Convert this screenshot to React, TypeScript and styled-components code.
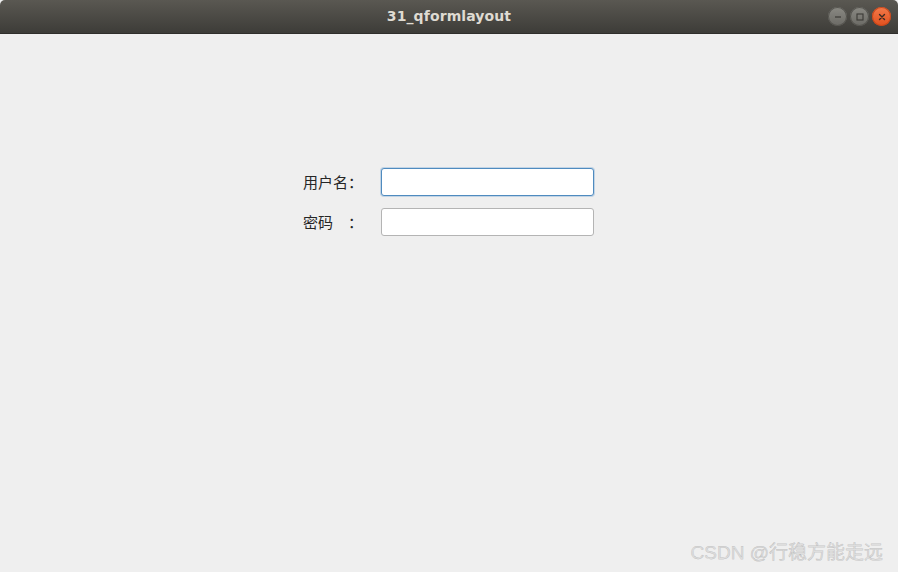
import styled, { createGlobalStyle } from "styled-components";

const GlobalStyle = createGlobalStyle`
  html, body {
    margin: 0;
    padding: 0;
    height: 100%;
    background: #efefef;
  }
  #root {
    height: 100%;
  }
`;

const Window = styled.div`
  display: flex;
  flex-direction: column;
  width: 898px;
  height: 572px;
  background: #efefef;
  overflow: hidden;
`;

const TitleBar = styled.div`
  position: relative;
  display: flex;
  align-items: center;
  justify-content: center;
  height: 33px;
  flex-shrink: 0;
  background: linear-gradient(#5a5852, #3d3c38);
  border-radius: 5px 5px 0 0;
  border-bottom: 1px solid #2f2e2b;
`;

const Title = styled.span`
  font-family: "DejaVu Sans", "Noto Sans", sans-serif;
  font-weight: bold;
  font-size: 14px;
  color: #dfdbd2;
  letter-spacing: 0.1px;
  margin-top: -1px;
`;

const Controls = styled.div`
  position: absolute;
  right: 7px;
  top: 7px;
  display: flex;
  gap: 3px;
`;

const WinButton = styled.div<{ $close?: boolean }>`
  width: 19px;
  height: 19px;
  border-radius: 50%;
  display: flex;
  align-items: center;
  justify-content: center;
  background: ${(p) =>
    p.$close
      ? "linear-gradient(#f37a4a, #e0501e)"
      : "linear-gradient(#8a8983, #6b6a65)"};
  box-shadow: inset 0 0 0 1px ${(p) => (p.$close ? "#c8461a" : "#55544f")};
`;

const Content = styled.div`
  flex: 1;
  display: flex;
  flex-direction: column;
  align-items: center;
  padding-top: 134px;
  position: relative;
`;

const Form = styled.div`
  display: grid;
  grid-template-columns: auto 213px;
  column-gap: 18px;
  row-gap: 12px;
  align-items: center;
  margin-right: 1px;
`;

const Label = styled.label`
  font-family: "Noto Sans CJK SC", "Noto Sans", sans-serif;
  font-size: 15px;
  color: #262626;
  white-space: pre;
  line-height: 20px;
`;

const Input = styled.input<{ $focused?: boolean }>`
  box-sizing: border-box;
  width: 213px;
  height: 28px;
  margin: 0;
  padding: 0 6px;
  background: #ffffff;
  border: 1px solid ${(p) => (p.$focused ? "#4f8bbf" : "#b4b4b4")};
  border-radius: 3px;
  outline: none;
  box-shadow: ${(p) => (p.$focused ? "0 0 0 1px rgba(90, 150, 205, 0.3)" : "none")};
  font-family: "Noto Sans", sans-serif;
  font-size: 14px;
`;

const Watermark = styled.div`
  position: absolute;
  right: 15px;
  bottom: 8px;
  font-family: "Liberation Sans", "Noto Sans CJK SC", sans-serif;
  font-size: 19px;
  color: #dedede;
  -webkit-text-stroke: 0.25px #a8a8a8;
`;

const CloseIcon = () => (
  <svg width="8" height="8" viewBox="0 0 8 8">
    <path d="M1.5 1.5 L6.5 6.5 M6.5 1.5 L1.5 6.5" stroke="#3a2a22" strokeWidth="1.4" strokeLinecap="round" />
  </svg>
);

const MinIcon = () => (
  <svg width="8" height="8" viewBox="0 0 8 8">
    <path d="M1 4 H7" stroke="#3b3a36" strokeWidth="1.2" />
  </svg>
);

const MaxIcon = () => (
  <svg width="8" height="8" viewBox="0 0 8 8">
    <rect x="1" y="1" width="6" height="6" fill="none" stroke="#3b3a36" strokeWidth="1.1" />
  </svg>
);

const App = (): JSX.Element => {
  return (
    <>
      <GlobalStyle />
      <Window>
        <TitleBar>
          <Title>31_qformlayout</Title>
          <Controls>
            <WinButton>
              <MinIcon />
            </WinButton>
            <WinButton>
              <MaxIcon />
            </WinButton>
            <WinButton $close>
              <CloseIcon />
            </WinButton>
          </Controls>
        </TitleBar>
        <Content>
          <Form>
            <Label htmlFor="user">用户名：</Label>
            <Input id="user" $focused />
            <Label htmlFor="pwd">{"密码\u3000："}</Label>
            <Input id="pwd" type="password" />
          </Form>
          <Watermark>CSDN @行稳方能走远</Watermark>
        </Content>
      </Window>
    </>
  );
};

export default App;
